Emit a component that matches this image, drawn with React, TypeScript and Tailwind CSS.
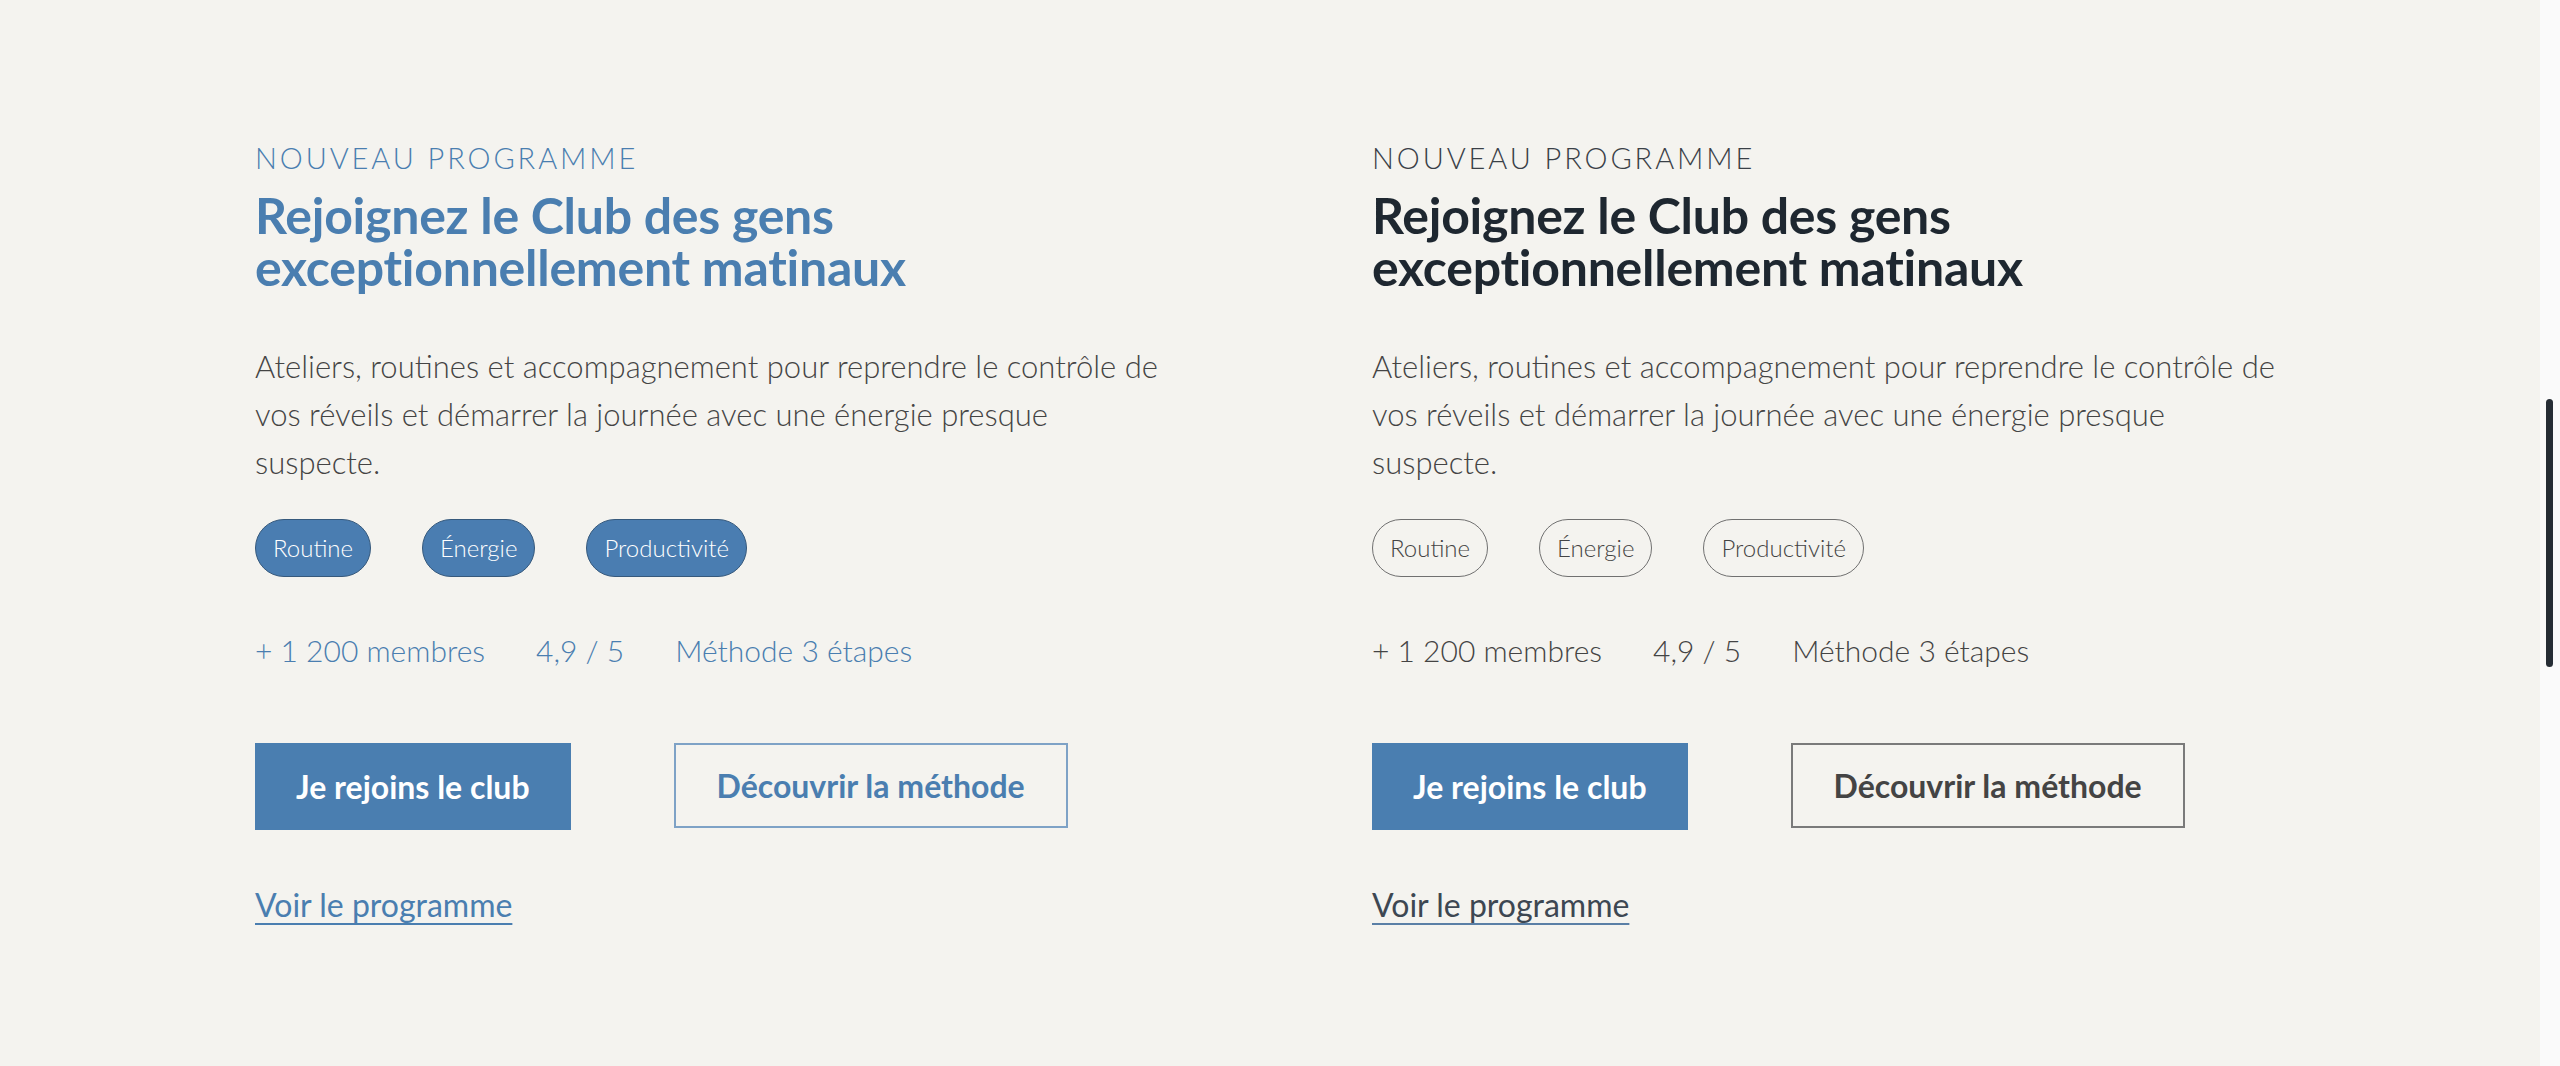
import React from "react";

type Variant = "blue" | "dark";

function Card({ v }: { v: Variant }) {
  const blue = v === "blue";
  return (
    <div className="flex flex-col items-start">
      <p
        className={`text-[29px] leading-[35px] font-light tracking-[0.1em] ${
          blue ? "text-[#4a7eb0]" : "text-[#3a4047]"
        }`}
      >
        NOUVEAU PROGRAMME
      </p>
      <h2
        className={`mt-[14px] text-[50px] leading-[52px] font-bold tracking-[-0.005em] ${
          blue ? "text-[#4a7eb0]" : "text-[#1e2730]"
        }`}
      >
        Rejoignez le Club des gens
        <br />
        exceptionnellement matinaux
      </h2>
      <p className="mt-[49px] text-[31px] leading-[48px] font-light text-[#444444]">
        Ateliers, routines et accompagnement pour reprendre le contrôle de
        <br />
        vos réveils et démarrer la journée avec une énergie presque
        <br />
        suspecte.
      </p>
      <div className="mt-[33px] flex gap-[51px]">
        {["Routine", "Énergie", "Productivité"].map((t) => (
          <span
            key={t}
            className={`flex h-[58px] items-center rounded-full border px-[17px] text-[24px] font-light ${
              blue
                ? "border-[#36597c] bg-[#4a7db1] text-white"
                : "border-[#707070] bg-transparent text-[#444444]"
            }`}
          >
            {t}
          </span>
        ))}
      </div>
      <div
        className={`mt-[53px] flex gap-[51px] text-[30px] leading-[40px] font-light ${
          blue ? "text-[#4a7eb0]" : "text-[#444444]"
        }`}
      >
        <span>+ 1 200 membres</span>
        <span>4,9 / 5</span>
        <span>Méthode 3 étapes</span>
      </div>
      <div className="mt-[73px] flex items-start gap-[103px]">
        <button className="flex h-[87px] items-center bg-[#4a7eb0] px-[41px] text-[32px] font-bold text-white">
          Je rejoins le club
        </button>
        <button
          className={`flex h-[85px] items-center border-2 bg-transparent px-[41px] text-[32px] font-bold ${
            blue
              ? "border-[#7ea2c6] text-[#4a7eb0]"
              : "border-[#7a7a7a] text-[#444444]"
          }`}
        >
          Découvrir la méthode
        </button>
      </div>
      <a
        href="#"
        className={`mt-[54px] text-[32px] leading-[42px] underline decoration-2 underline-offset-[6px] ${
          blue
            ? "text-[#4a7eb0] decoration-[#4a7eb0]"
            : "text-[#3d4752] decoration-[#5a7fa6]"
        }`}
      >
        Voir le programme
      </a>
    </div>
  );
}

export default function App() {
  return (
    <div className="flex h-[1066px] w-full overflow-hidden bg-[#f4f3ef] [font-family:Lato,'Noto_Sans',sans-serif]">
      <main className="grid flex-1 grid-cols-2 gap-x-[204px] px-[255px] pt-[140px]">
        <Card v="blue" />
        <Card v="dark" />
      </main>
      <aside className="relative w-[20px] shrink-0 bg-[#fafafa]">
        <div className="absolute left-[6px] top-[399px] h-[268px] w-[7px] rounded-full bg-[#262d35]" />
      </aside>
    </div>
  );
}
